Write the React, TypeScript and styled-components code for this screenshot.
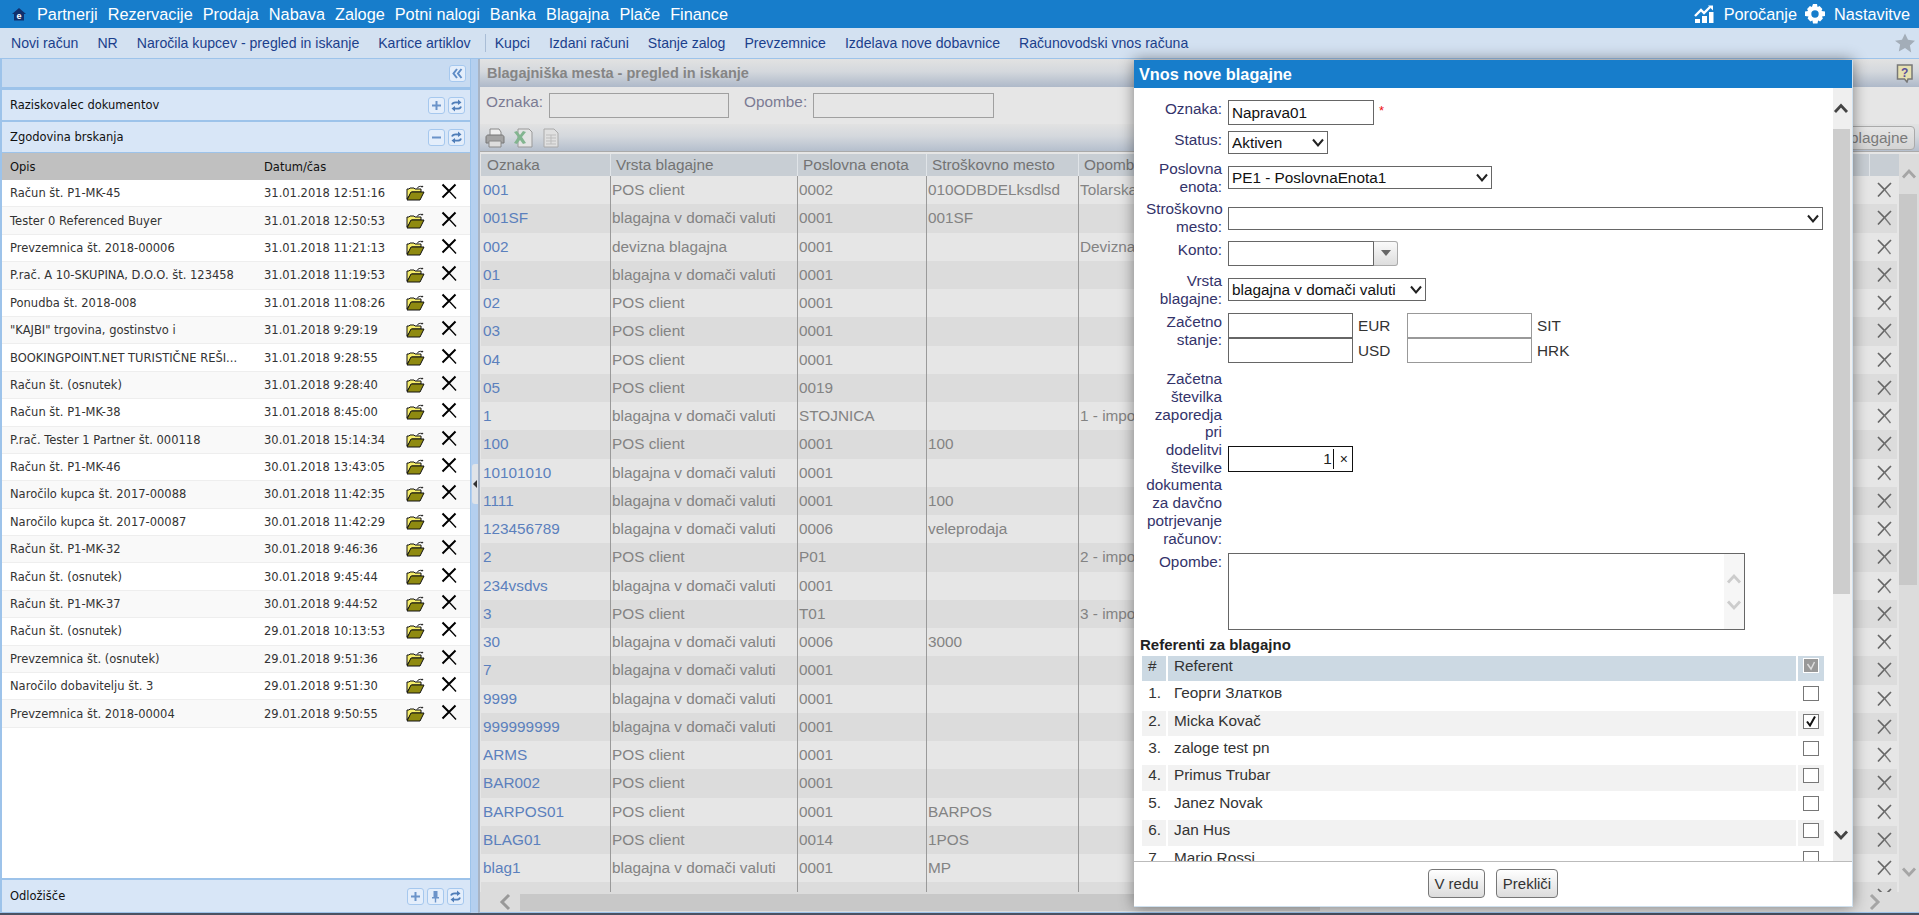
import React from "react";
import styled, { createGlobalStyle } from "styled-components";

const Global = createGlobalStyle`
  html, body { margin: 0; padding: 0; overflow: hidden; background: #fff; }
  * { box-sizing: border-box; }
  body { font-family: "Liberation Sans", Arial, sans-serif; }
`;

const Page = styled.div`
  width: 1919px; height: 915px; display: flex; flex-direction: column; overflow: hidden; background: #c8dbf1;
`;
const TopBar = styled.header`
  height: 28px; flex: none; background: #177dcb; display: flex; align-items: center; color: #fff; padding-left: 11px;
`;
const Logo = styled.svg`width: 16px; height: 16px; margin-right: 10px; flex: none;`;
const MainMenu = styled.nav`display: flex; gap: 10px;`;
const MenuItem = styled.span`font-size: 16.3px; line-height: 28px; color: #fff; white-space: nowrap;`;
const TopRight = styled.div`margin-left: auto; display: flex; align-items: center; padding-right: 9px;`;
const TopIcon = styled.svg<{ $ml: number; $mr: number }>`
  width: 20px; height: 20px; margin-left: ${p => p.$ml}px; margin-right: ${p => p.$mr}px; flex: none;
`;

const SubBar = styled.div`
  height: 31px; flex: none; background: #d3e1f1; display: flex; align-items: center; padding: 0 4px 0 11px;
  border-bottom: 1px solid #9dc3ea;
`;
const SubLink = styled.span`font-size: 14.1px; color: #1b3f8c; white-space: nowrap; margin-right: 19px;`;
const SubSep = styled.span`width: 1px; height: 18px; background: #a9bdd6; margin: 0 9px 0 -5px;`;
const StarIcon = styled.svg`width: 20px; height: 20px; margin-left: auto;`;

const Body = styled.div`flex: 1; min-height: 0; display: flex; position: relative;`;
const Left = styled.aside`
  width: 471px; flex: none; display: flex; flex-direction: column; background: #fff;
  border: solid #9dc3ea; border-width: 0 1px 1px 2px;
`;
const LeftHead = styled.div`
  height: 30px; flex: none; background: #c8dbf1; border-bottom: 2px solid #9dc3ea;
  display: flex; align-items: center; justify-content: flex-end; padding: 0 4px 0 0;
`;
const Section = styled.div`
  height: 32px; flex: none; background: #d8e6f7; border-bottom: 1px solid #9dc3ea; border-top: 1px solid #9dc3ea;
  display: flex; align-items: center; gap: 3px; padding: 0 5px 0 8px;
  font: 11.5px "DejaVu Sans", sans-serif; color: #111;
`;
const SectionTitle = styled.span`margin-right: auto;`;
const MiniBtn = styled.span`
  width: 17px; height: 17px; border: 1px solid #a6c8ee; border-radius: 3px; background: #e4eefb;
  display: flex; align-items: center; justify-content: center;
`;
const MiniIcon = styled.svg`width: 13px; height: 13px;`;
const HistHead = styled.div`
  height: 27px; flex: none; background: #c0c0c0; display: grid; grid-template-columns: 254px 1fr; align-items: center;
  padding-left: 8px; font: 11.5px "DejaVu Sans", sans-serif; color: #111;
`;
const HistList = styled.div`flex: 1; min-height: 0; overflow: hidden;`;
const HistRow = styled.div<{ $alt: boolean }>`
  height: 27.4px; display: grid; grid-template-columns: 254px 142px 35px 20px; align-items: center; padding-left: 8px;
  font: 11.5px "DejaVu Sans", sans-serif; color: #333; border-bottom: 1px solid #eee;
  background: ${p => (p.$alt ? "#f9f9f9" : "#fff")}; white-space: nowrap;
`;
const FolderSvg = styled.svg`width: 19px; height: 16px;`;
const CrossSvg = styled.svg`width: 17px; height: 17px; margin-top: -3px;`;
const ClipFoot = styled(Section)`height: 34px; border-bottom: 0; border-top: 2px solid #9dc3ea; padding-right: 6px;`;

const Splitter = styled.div`width: 7px; flex: none; background: #b4cfef; display: flex; align-items: center; justify-content: flex-end;`;
const Handle = styled.div`
  width: 6px; height: 40px; background: #dfe3e8; border-radius: 3px 0 0 3px; display: flex; align-items: center; justify-content: center;
  margin-top: -5px;
`;
const HandleArrow = styled.span`
  width: 0; height: 0; border: 4px solid transparent; border-right: 4px solid #333; border-left: 0;
`;

const Main = styled.main`
  flex: 1; min-width: 0; position: relative; display: flex; flex-direction: column; background: #e6e6e6;
  border-left: 2px solid #a9b4c4; border-bottom: 1px solid #9dc3ea; font-size: 15.33px; color: #777;
`;
const TitleBar = styled.div`
  height: 28px; flex: none; display: flex; align-items: center; justify-content: space-between; padding: 0 5px 0 7px;
  background: linear-gradient(#e2e2e2, #d4d8dd 45%, #aeb9c9);
  font-weight: bold; font-size: 14.5px; color: #858585;
`;
const HelpSvg = styled.svg`width: 18px; height: 19px;`;
const FilterRow = styled.div`
  height: 37px; flex: none; display: flex; padding: 6px 0 0 6px; align-items: flex-start;
  font-size: 15.33px; color: #7b7b93; position: relative;
`;
const FilterLabel = styled.span`line-height: 18px;`;
const FilterInput = styled.div<{ $w: number; $mr: number }>`
  width: ${p => p.$w}px; height: 25px; border: 1px solid #a0a0a0; margin: 0 ${p => p.$mr}px 0 6px;
`;
const Toolbar = styled.div`
  height: 28px; flex: none; display: flex; align-items: center; gap: 8px; padding: 0 0 0 5px; position: relative;
  background: linear-gradient(#e2e2e2, #d4d8dd 45%, #b5bfcd); border-bottom: 1px solid #aaa;
`;
const ToolSvg = styled.svg`width: 20px; height: 20px;`;
const NewBtn = styled.div`
  position: absolute; right: 4px; top: 2px; height: 24px; padding: 0 6px; border: 1px solid #aaa; border-radius: 4px;
  background: linear-gradient(#e6e6e6, #d4d4d4); line-height: 22px; font-size: 15.33px; color: #7a7a7a; white-space: nowrap;
`;
const GridWrap = styled.div`flex: 1; min-height: 0; display: flex; overflow: hidden; padding-top: 2px;`;
const GridCol = styled.div`flex: 1; min-width: 0; overflow: hidden; padding-left: 1px;`;
const COLS = "129px 187px 129px 152px 791px 32px";
const GridHead = styled.div`
  height: 22px; display: grid; grid-template-columns: ${COLS}; background: #c8ced4; width: 1420px;
`;
const HeadCell = styled.div`
  padding-left: 5px; line-height: 21px; color: #737373; white-space: nowrap; border-left: 1px solid #e0e4e8; overflow: hidden;
  &:first-child { border-left: 0; padding-left: 6px; }
`;
const GridRow = styled.div<{ $alt: boolean }>`
  height: 28.25px; display: grid; grid-template-columns: ${COLS}; width: 1416px; background: ${p => (p.$alt ? "#dcdcdc" : "#e6e6e6")};
`;
const Cell = styled.div`
  padding-left: 1px; line-height: 28px; white-space: nowrap; overflow: hidden; border-left: 1px solid #9a9a9a; color: #838383;
`;
const LinkCell = styled.div`padding-left: 2px; line-height: 28px; white-space: nowrap; color: #5b80bd;`;
const XCell = styled.div`display: flex; align-items: center; justify-content: center; padding-right: 1px;`;
const GreyX = styled.svg`width: 15px; height: 16px;`;
const VScroll = styled.div`
  width: 20px; flex: none; background: #dcdcdc; display: flex; flex-direction: column; align-items: center;
`;
const ScrollArrow = styled.svg<{ $h: number }>`width: 16px; height: ${p => p.$h}px; flex: none;`;
const VThumb = styled.div<{ $h: number; $c: string; $w: number }>`
  width: ${p => p.$w}px; height: ${p => p.$h}px; background: ${p => p.$c}; flex: none; align-self: flex-start;
`;
const ScrollGap = styled.div`flex: 1;`;
const HScroll = styled.div`
  height: 20px; flex: none; display: flex; align-items: center; background: #dcdcdc; padding-left: 18px; margin-bottom: 0;
`;
const HThumb = styled.div`width: 800px; height: 17px; background: #c8c8c8; margin-left: 6px;`;
const HArrowRight = styled.svg`width: 16px; height: 18px; margin-left: auto; margin-right: 37px;`;
const HArrowLeft = styled.svg`width: 16px; height: 18px;`;

const Modal = styled.section`
  position: absolute; left: 654px; top: 1px; width: 719px; height: 847px; background: #fff; display: flex; flex-direction: column;
  box-shadow: 0 0 14px rgba(0, 0, 0, .45); z-index: 5; border-right: 1px solid #cfe0ee; border-bottom: 1px solid #cfe0ee;
`;
const ModalTitle = styled.h2`
  margin: 0; height: 28px; flex: none; background: #177dcb; color: #fff; font-size: 16.3px; font-weight: bold; line-height: 29px; padding-left: 5px;
`;
const ModalMiddle = styled.div`flex: 1; min-height: 0; display: flex;`;
const ModalBody = styled.div`flex: 1; min-width: 0; overflow: hidden; padding-top: 12px;`;
const ModalScroll = styled(VScroll)`background: #efefef; width: 19px; align-items: flex-start;`;
const FormRow = styled.div<{ $pb: number }>`
  display: grid; grid-template-columns: 88px 1fr; column-gap: 6px; padding-bottom: ${p => p.$pb}px;
`;
const FormLabel = styled.label`
  text-align: right; color: #33336a; font-size: 15.33px; line-height: 17.7px; padding-left: 12px;
`;
const Field = styled.div`align-self: center; display: flex; align-items: center;`;
const TextInput = styled.input<{ $w: number }>`
  width: ${p => p.$w}px; height: 25px; border: 1px solid #666; padding: 0 3px; margin: 0; background: #fff; outline: none;
  font: 15.33px "Liberation Sans", sans-serif; color: #111; border-radius: 0;
`;
const Req = styled.span`color: #e11; font-size: 13px; margin: -4px 0 0 5px;`;
const SelectWrap = styled.div<{ $w: number }>`position: relative; width: ${p => p.$w}px; height: 23px;`;
const NativeSelect = styled.select`
  appearance: none; width: 100%; height: 100%; border: 1px solid #666; background: #fff; padding: 0 0 0 3px; margin: 0; border-radius: 0;
  font: 15.33px "Liberation Sans", sans-serif; color: #111; outline: none;
`;
const SelectChevron = styled.svg`position: absolute; right: 4px; top: 6px; width: 12px; height: 11px; pointer-events: none;`;
const ComboBtn = styled.span`
  width: 25px; height: 25px; margin-left: -1px; border: 1px solid #aaa; border-radius: 0 3px 3px 0; border-left-color: #666;
  background: linear-gradient(#fafafa, #ddd); display: flex; align-items: center; justify-content: center;
`;
const ComboArrow = styled.span`width: 0; height: 0; border: 5px solid transparent; border-top: 6px solid #666; border-bottom: 0;`;
const MoneyGrid = styled.div`
  display: grid; grid-template-columns: 125px 54px 125px auto; align-items: center; font-size: 15.33px; color: #333;
`;
const MoneyInput = styled.input<{ $light?: boolean }>`
  width: 125px; height: 25px; margin: 0; padding: 0; background: #fff; outline: none; border-radius: 0;
  border: 1px solid ${p => (p.$light ? "#999" : "#666")};
`;
const Unit = styled.span`padding-left: 5px;`;
const FocusInput = styled.div`
  width: 125px; height: 26px; border: 1px solid #111; display: flex; align-items: center; justify-content: flex-end;
  font-size: 15.33px; color: #222; padding-right: 4px;
`;
const Caret = styled.span`width: 1px; height: 20px; background: #111; margin: 0 6px 0 1px;`;
const Clear = styled.span`font-size: 14px; color: #222;`;
const Area = styled.div`
  width: 517px; height: 77px; border: 1px solid #666; display: flex; justify-content: flex-end;
`;
const AreaScroll = styled.div`
  width: 20px; background: #f6f6f6; display: flex; flex-direction: column; align-items: center; justify-content: center; gap: 8px;
`;
const RefHeading = styled.h3`
  margin: 0 0 0 6px; font-size: 15px; line-height: 18px; font-weight: bold; color: #222;
`;
const RefTable = styled.table`
  border-collapse: separate; border-spacing: 2px; margin-left: 6px; width: 686px; table-layout: fixed; font-size: 15.33px; color: #333;
`;
const RefHeadCell = styled.th<{ $w?: number }>`
  ${p => (p.$w ? `width: ${p.$w}px;` : "")} height: 25px; background: #ccd9e3; font-weight: normal; text-align: left; vertical-align: top;
  padding: 0 0 0 6px; line-height: 19px; color: #333;
`;
const RefCell = styled.td<{ $alt: boolean; $num?: boolean }>`
  height: 25.4px; padding: 1px 5px 0 6px; vertical-align: top; line-height: 18px; white-space: nowrap;
  background: ${p => (p.$alt ? "#f2f2f2" : "#fff")}; text-align: ${p => (p.$num ? "right" : "left")};
`;
const BoxCell = styled.td<{ $alt: boolean }>`
  height: 25.4px; padding: 3px 0 0 5px; vertical-align: top; background: ${p => (p.$alt ? "#f2f2f2" : "#fff")};
`;
const BoxHeadCell = styled.th`
  width: 26px; height: 25px; padding: 2px 0 0 5px; vertical-align: top; background: #ccd9e3;
`;
const Box = styled.span<{ $head?: boolean }>`
  display: flex; align-items: center; justify-content: center; width: 16px; height: 15px;
  border: 1px solid ${p => (p.$head ? "#fff" : "#777")}; background: ${p => (p.$head ? "#999" : "#fff")};
`;
const CheckSvg = styled.svg`width: 12px; height: 12px;`;
const ModalFoot = styled.footer`
  height: 45px; flex: none; border-top: 1px solid #bbb; display: flex; align-items: center; justify-content: center; gap: 11px; padding-bottom: 2px;
`;
const FootBtn = styled.button<{ $w: number }>`
  width: ${p => p.$w}px; height: 29px; border: 1px solid #777; border-radius: 4px; background: linear-gradient(#fff, #dcdcdc);
  font: 15px "Liberation Sans", sans-serif; color: #333; padding: 0;
`;
const BottomLine = styled.div`height: 2px; flex: none; background: #4b5262;`;

const menu = ["Partnerji", "Rezervacije", "Prodaja", "Nabava", "Zaloge", "Potni nalogi", "Banka", "Blagajna", "Plače", "Finance"];
const sub1 = ["Novi račun", "NR", "Naročila kupcev - pregled in iskanje", "Kartice artiklov"];
const sub2 = ["Kupci", "Izdani računi", "Stanje zalog", "Prevzemnice", "Izdelava nove dobavnice", "Računovodski vnos računa"];
const history: [string, string][] = [
  ["Račun št. P1-MK-45", "31.01.2018 12:51:16"],
  ["Tester 0 Referenced Buyer", "31.01.2018 12:50:53"],
  ["Prevzemnica št. 2018-00006", "31.01.2018 11:21:13"],
  ["P.rač. A 10-SKUPINA, D.O.O. št. 123458", "31.01.2018 11:19:53"],
  ["Ponudba št. 2018-008", "31.01.2018 11:08:26"],
  ["\"KAJBI\" trgovina, gostinstvo i", "31.01.2018 9:29:19"],
  ["BOOKINGPOINT.NET TURISTIČNE REŠI...", "31.01.2018 9:28:55"],
  ["Račun št. (osnutek)", "31.01.2018 9:28:40"],
  ["Račun št. P1-MK-38", "31.01.2018 8:45:00"],
  ["P.rač. Tester 1 Partner št. 000118", "30.01.2018 15:14:34"],
  ["Račun št. P1-MK-46", "30.01.2018 13:43:05"],
  ["Naročilo kupca št. 2017-00088", "30.01.2018 11:42:35"],
  ["Naročilo kupca št. 2017-00087", "30.01.2018 11:42:29"],
  ["Račun št. P1-MK-32", "30.01.2018 9:46:36"],
  ["Račun št. (osnutek)", "30.01.2018 9:45:44"],
  ["Račun št. P1-MK-37", "30.01.2018 9:44:52"],
  ["Račun št. (osnutek)", "29.01.2018 10:13:53"],
  ["Prevzemnica št. (osnutek)", "29.01.2018 9:51:36"],
  ["Naročilo dobavitelju št. 3", "29.01.2018 9:51:30"],
  ["Prevzemnica št. 2018-00004", "29.01.2018 9:50:55"],
];
const P = "POS client", B = "blagajna v domači valuti";
const rows: string[][] = [
  ["001", P, "0002", "010ODBDELksdlsd", "Tolarska"],
  ["001SF", B, "0001", "001SF", ""],
  ["002", "devizna blagajna", "0001", "", "Devizna"],
  ["01", B, "0001", "", ""],
  ["02", P, "0001", "", ""],
  ["03", P, "0001", "", ""],
  ["04", P, "0001", "", ""],
  ["05", P, "0019", "", ""],
  ["1", B, "STOJNICA", "", "1 - impo"],
  ["100", P, "0001", "100", ""],
  ["10101010", B, "0001", "", ""],
  ["1111", B, "0001", "100", ""],
  ["123456789", B, "0006", "veleprodaja", ""],
  ["2", P, "P01", "", "2 - impo"],
  ["234vsdvs", B, "0001", "", ""],
  ["3", P, "T01", "", "3 - impo"],
  ["30", B, "0006", "3000", ""],
  ["7", B, "0001", "", ""],
  ["9999", B, "0001", "", ""],
  ["999999999", B, "0001", "", ""],
  ["ARMS", P, "0001", "", ""],
  ["BAR002", P, "0001", "", ""],
  ["BARPOS01", P, "0001", "BARPOS", ""],
  ["BLAG01", P, "0014", "1POS", ""],
  ["blag1", B, "0001", "MP", ""],
  ["", "", "", "", ""],
];
const referents: [string, boolean][] = [
  ["Георги Златков", false], ["Micka Kovač", true], ["zaloge test pn", false], ["Primus Trubar", false],
  ["Janez Novak", false], ["Jan Hus", false], ["Mario Rossi", false],
];

const Folder = () => (
  <FolderSvg viewBox="0 0 19 16">
    <path d="M11 3.500C12 1.500 14 1 16 1.500" fill="none" stroke="#222" strokeWidth="1" />
    <path d="M16 0.500l1.500 1.200-2 1z" fill="#222" />
    <path d="M1 14V4h2l1-1h4l1 1h6v3H6z" fill="#f6ee6c" stroke="#111" strokeWidth="1" />
    <path d="M1 15l4-8h13l-4 8z" fill="#8f8a10" stroke="#111" strokeWidth="1" />
  </FolderSvg>
);
const Cross = () => (
  <CrossSvg viewBox="0 0 17 17">
    <path d="M1.500 1.500l6.500 6.500 6.500-6.500M8 8l-6.500 6.500" fill="none" stroke="#000" strokeWidth="2" />
    <path d="M8 8l7 7.500" stroke="#000" strokeWidth="1.300" />
  </CrossSvg>
);
const GX = () => (
  <GreyX viewBox="0 0 15 16">
    <path d="M1 1l6.500 6.500L14 1M7.500 7.500L1 14.500" fill="none" stroke="#666" strokeWidth="1.700" />
    <path d="M7.500 7.500l6 7.500" stroke="#777" strokeWidth="1.300" />
  </GreyX>
);
const Chevron = ({ up, color, h }: { up?: boolean; color: string; h: number }) => (
  <ScrollArrow $h={h} viewBox={`0 0 16 ${h}`}>
    <path d={up ? `M2 ${h / 2 + 3.5}L8 ${h / 2 - 3}l6 6.500` : `M2 ${h / 2 - 3.5}L8 ${h / 2 + 3}l6-6.500`} fill="none" stroke={color} strokeWidth="2.800" />
  </ScrollArrow>
);
const PlusIcon = () => <MiniIcon viewBox="0 0 13 13"><path d="M6.500 2v9M2 6.500h9" stroke="#6b93c9" strokeWidth="2" /></MiniIcon>;
const MinusIcon = () => <MiniIcon viewBox="0 0 13 13"><path d="M2 6.500h9" stroke="#6b93c9" strokeWidth="2" /></MiniIcon>;
const SwapIcon = () => (
  <MiniIcon viewBox="0 0 13 13">
    <path d="M2 5.500C2.500 3.500 5 3 8 3.500M11 7.500C10.500 9.500 8 10 5 9.500" fill="none" stroke="#4f7db8" strokeWidth="1.800" />
    <path d="M8 0.500l3.500 3L8 6zM5 7l-3.500 2.500L5 12.500z" fill="#4f7db8" />
  </MiniIcon>
);
const PinIcon = () => (
  <MiniIcon viewBox="0 0 13 13"><path d="M4.500 1h4v6h1.500v1.500H7.200V12.500H5.800V8.500H3V7h1.500z" fill="#6b93c9" /></MiniIcon>
);
const SelectArrow = () => (
  <SelectChevron viewBox="0 0 12 11"><path d="M1 2.500l5 6 5-6" fill="none" stroke="#222" strokeWidth="2" /></SelectChevron>
);

export default function App() {
  return (
    <Page>
      <Global />
      <TopBar>
        <Logo viewBox="0 0 16 16">
          <path d="M8 2L1 8H3V14.500H13V8H15z" fill="#10306e" />
          <text x="8" y="12.500" fontSize="9" fontWeight="bold" fill="#fff" textAnchor="middle" fontFamily="Liberation Sans">e</text>
        </Logo>
        <MainMenu>{menu.map(m => <MenuItem key={m}>{m}</MenuItem>)}</MainMenu>
        <TopRight>
          <TopIcon $ml={0} $mr={10} viewBox="0 0 20 20">
            <path d="M1 12L7 6l3 3 6-6" fill="none" stroke="#fff" strokeWidth="2.400" />
            <path d="M14 1.500h5v5z" fill="#fff" />
            <path d="M1 15h5v4H1zM8 12h5v7H8zM15 8h4.500v11H15z" fill="#fff" />
          </TopIcon>
          <MenuItem>Poročanje</MenuItem>
          <TopIcon $ml={8} $mr={9} viewBox="0 0 20 20">
            <path fillRule="evenodd" fill="#fff" d="M8 0h4l.6 3 2-.9 2.800 2.800-.9 2 3.500.6v4.500l-3 .6.900 2-2.800 2.800-2-.9-.6 3H8l-.6-3-2 .9-2.800-2.800.9-2-3.500-.6V7.500l3-.6-.9-2L4.900 2.100l2 .9zM10 6.300a3.700 3.700 0 1 0 0 7.400 3.700 3.700 0 0 0 0-7.400z" />
          </TopIcon>
          <MenuItem>Nastavitve</MenuItem>
        </TopRight>
      </TopBar>

      <SubBar>
        {sub1.map(s => <SubLink key={s}>{s}</SubLink>)}
        <SubSep />
        {sub2.map(s => <SubLink key={s}>{s}</SubLink>)}
        <StarIcon viewBox="0 0 20 20">
          <path d="M10 .5l3 6.300 7 .9-5.100 4.800 1.300 6.900L10 15.100l-6.200 3.300 1.300-6.900L0 7.700l7-.9z" fill="#a3adb8" />
        </StarIcon>
      </SubBar>

      <Body>
        <Left>
          <LeftHead>
            <MiniBtn>
              <MiniIcon viewBox="0 0 13 13"><path d="M6 2L2.500 6.500 6 11M10.500 2L7 6.500 10.500 11" fill="none" stroke="#5f8cc6" strokeWidth="2" /></MiniIcon>
            </MiniBtn>
          </LeftHead>
          <Section>
            <SectionTitle>Raziskovalec dokumentov</SectionTitle>
            <MiniBtn><PlusIcon /></MiniBtn>
            <MiniBtn><SwapIcon /></MiniBtn>
          </Section>
          <Section>
            <SectionTitle>Zgodovina brskanja</SectionTitle>
            <MiniBtn><MinusIcon /></MiniBtn>
            <MiniBtn><SwapIcon /></MiniBtn>
          </Section>
          <HistHead><span>Opis</span><span>Datum/čas</span></HistHead>
          <HistList>
            {history.map(([d, t], i) => (
              <HistRow key={i} $alt={i % 2 === 1}>
                <span>{d}</span><span>{t}</span><Folder /><Cross />
              </HistRow>
            ))}
          </HistList>
          <ClipFoot>
            <SectionTitle>Odložišče</SectionTitle>
            <MiniBtn><PlusIcon /></MiniBtn>
            <MiniBtn><PinIcon /></MiniBtn>
            <MiniBtn><SwapIcon /></MiniBtn>
          </ClipFoot>
        </Left>
        <Splitter><Handle><HandleArrow /></Handle></Splitter>
        <Main>
          <TitleBar>
            <span>Blagajniška mesta - pregled in iskanje</span>
            <HelpSvg viewBox="0 0 18 19">
              <path d="M1.500 1h14.500v14h-4l-1 3-2.500-3H1.500z" fill="#e6e0b0" stroke="#777" strokeWidth="1.500" />
              <text x="8.700" y="12.500" fontSize="12" fontWeight="bold" fill="#5a4f9a" textAnchor="middle" fontFamily="Liberation Sans">?</text>
            </HelpSvg>
          </TitleBar>
          <FilterRow>
            <FilterLabel>Oznaka:</FilterLabel>
            <FilterInput $w={180} $mr={15} />
            <FilterLabel>Opombe:</FilterLabel>
            <FilterInput $w={181} $mr={0} />
          </FilterRow>
          <Toolbar>
            <ToolSvg viewBox="0 0 20 20">
              <path d="M5 1h9l2 3v4H5z" fill="#eee" stroke="#888" />
              <path d="M1 9c0-1 1-2 2-2h14c1 0 2 1 2 2v6H1z" fill="#a3a3a3" stroke="#777" />
              <path d="M4 13h12v6H4z" fill="#ddd" stroke="#888" />
            </ToolSvg>
            <ToolSvg viewBox="0 0 20 20">
              <path d="M5 1h11l3 3v15H5z" fill="#e4e4e4" stroke="#999" />
              <path d="M1 4l3-1 3 4 3-4 3 1-4 5 4 6-3 1-3-4-3 4-3-1 4-6z" fill="#83b590" />
            </ToolSvg>
            <ToolSvg viewBox="0 0 20 20">
              <path d="M3 1h10l4 4v14H3z" fill="#e0e0e0" stroke="#aaa" />
              <path d="M5 7h10M5 10h10M5 13h10M5 16h10M10 7v9" stroke="#bdbdbd" />
            </ToolSvg>
            <NewBtn>Vnos nove blagajne</NewBtn>
          </Toolbar>
          <GridWrap>
            <GridCol>
              <GridHead>
                {["Oznaka", "Vrsta blagajne", "Poslovna enota", "Stroškovno mesto", "Opombe", ""].map((h, i) => (
                  <HeadCell key={i}>{h}</HeadCell>
                ))}
              </GridHead>
              {rows.map((r, i) => (
                <GridRow key={i} $alt={i % 2 === 1}>
                  <LinkCell>{r[0]}</LinkCell>
                  <Cell>{r[1]}</Cell>
                  <Cell>{r[2]}</Cell>
                  <Cell>{r[3]}</Cell>
                  <Cell>{r[4]}</Cell>
                  <XCell><GX /></XCell>
                </GridRow>
              ))}
            </GridCol>
            <VScroll>
              <Chevron up color="#a5a5a5" h={40} />
              <VThumb $h={391} $c="#c8c8c8" $w={18} />
              <ScrollGap />
              <Chevron color="#a5a5a5" h={40} />
            </VScroll>
          </GridWrap>
          <HScroll>
            <HArrowLeft viewBox="0 0 16 18"><path d="M11 2L4 9l7 7" fill="none" stroke="#999" strokeWidth="3" /></HArrowLeft>
            <HThumb />
            <HArrowRight viewBox="0 0 16 18"><path d="M5 2l7 7-7 7" fill="none" stroke="#a5a5a5" strokeWidth="3" /></HArrowRight>
          </HScroll>

          <Modal>
            <ModalTitle>Vnos nove blagajne</ModalTitle>
            <ModalMiddle>
              <ModalBody>
                <FormRow $pb={6}>
                  <FormLabel>Oznaka:</FormLabel>
                  <Field><TextInput $w={146} defaultValue="Naprava01" /><Req>*</Req></Field>
                </FormRow>
                <FormRow $pb={6}>
                  <FormLabel>Status:</FormLabel>
                  <Field>
                    <SelectWrap $w={100}>
                      <NativeSelect defaultValue="Aktiven"><option>Aktiven</option></NativeSelect>
                      <SelectArrow />
                    </SelectWrap>
                  </Field>
                </FormRow>
                <FormRow $pb={5}>
                  <FormLabel>Poslovna enota:</FormLabel>
                  <Field>
                    <SelectWrap $w={264}>
                      <NativeSelect defaultValue="PE1 - PoslovnaEnota1"><option>PE1 - PoslovnaEnota1</option></NativeSelect>
                      <SelectArrow />
                    </SelectWrap>
                  </Field>
                </FormRow>
                <FormRow $pb={5}>
                  <FormLabel>Stroškovno mesto:</FormLabel>
                  <Field>
                    <SelectWrap $w={595}>
                      <NativeSelect defaultValue=""><option value=""></option></NativeSelect>
                      <SelectArrow />
                    </SelectWrap>
                  </Field>
                </FormRow>
                <FormRow $pb={6}>
                  <FormLabel>Konto:</FormLabel>
                  <Field><TextInput $w={146} /><ComboBtn><ComboArrow /></ComboBtn></Field>
                </FormRow>
                <FormRow $pb={6}>
                  <FormLabel>Vrsta blagajne:</FormLabel>
                  <Field>
                    <SelectWrap $w={198}>
                      <NativeSelect defaultValue={B}><option>{B}</option></NativeSelect>
                      <SelectArrow />
                    </SelectWrap>
                  </Field>
                </FormRow>
                <FormRow $pb={7}>
                  <FormLabel>Začetno stanje:</FormLabel>
                  <MoneyGrid>
                    <MoneyInput /><Unit>EUR</Unit><MoneyInput $light /><Unit>SIT</Unit>
                    <MoneyInput /><Unit>USD</Unit><MoneyInput $light /><Unit>HRK</Unit>
                  </MoneyGrid>
                </FormRow>
                <FormRow $pb={6}>
                  <FormLabel>Začetna številka zaporedja pri dodelitvi številke dokumenta za davčno potrjevanje računov:</FormLabel>
                  <Field><FocusInput>1<Caret /><Clear>×</Clear></FocusInput></Field>
                </FormRow>
                <FormRow $pb={6}>
                  <FormLabel>Opombe:</FormLabel>
                  <Area>
                    <AreaScroll>
                      <Chevron up color="#ccc" h={18} />
                      <Chevron color="#ccc" h={18} />
                    </AreaScroll>
                  </Area>
                </FormRow>
                <RefHeading>Referenti za blagajno</RefHeading>
                <RefTable>
                  <thead>
                    <tr>
                      <RefHeadCell $w={24}>#</RefHeadCell>
                      <RefHeadCell>Referent</RefHeadCell>
                      <BoxHeadCell>
                        <Box $head>
                          <CheckSvg viewBox="0 0 12 12"><path d="M2.500 4l3.500 5 3.500-7" fill="none" stroke="#ddd" strokeWidth="1.500" /></CheckSvg>
                        </Box>
                      </BoxHeadCell>
                    </tr>
                  </thead>
                  <tbody>
                    {referents.map(([n, c], i) => (
                      <tr key={n}>
                        <RefCell $alt={i % 2 === 1} $num>{i + 1}.</RefCell>
                        <RefCell $alt={i % 2 === 1}>{n}</RefCell>
                        <BoxCell $alt={i % 2 === 1}>
                          <Box>
                            {c && <CheckSvg viewBox="0 0 12 12"><path d="M2 6.500l3 4 5-9" fill="none" stroke="#111" strokeWidth="2" /></CheckSvg>}
                          </Box>
                        </BoxCell>
                      </tr>
                    ))}
                  </tbody>
                </RefTable>
              </ModalBody>
              <ModalScroll>
                <Chevron up color="#444" h={41} />
                <VThumb $h={465} $c="#cdcdcd" $w={17} />
                <ScrollGap />
                <Chevron color="#444" h={52} />
              </ModalScroll>
            </ModalMiddle>
            <ModalFoot>
              <FootBtn $w={57}>V redu</FootBtn>
              <FootBtn $w={62}>Prekliči</FootBtn>
            </ModalFoot>
          </Modal>
        </Main>
      </Body>
      <BottomLine />
    </Page>
  );
}
